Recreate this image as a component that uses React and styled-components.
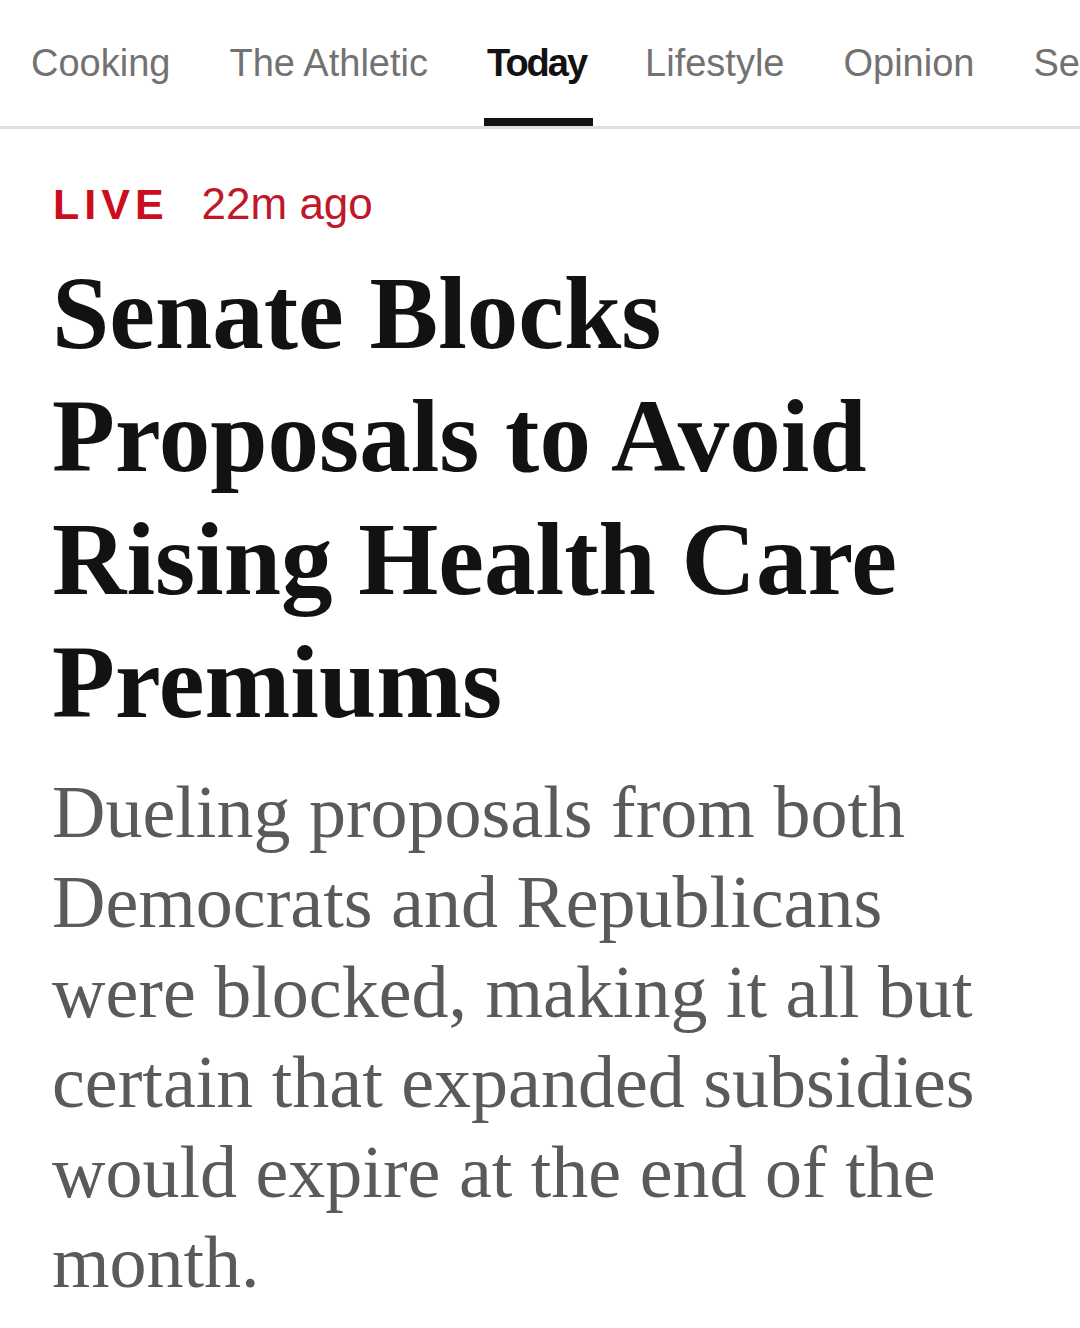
import React from "react";
import styled, { createGlobalStyle } from "styled-components";

const GlobalStyle = createGlobalStyle`
  html, body {
    margin: 0;
    padding: 0;
    background: #ffffff;
  }
  body {
    font-family: "Liberation Sans", Arial, sans-serif;
    -webkit-font-smoothing: antialiased;
  }
`;

const Page = styled.div`
  width: 1080px;
  min-height: 1328px;
  background: #ffffff;
  overflow: hidden;
`;

const TabBar = styled.nav`
  display: flex;
  align-items: center;
  gap: 59px;
  height: 126px;
  padding-left: 31px;
  border-bottom: 3px solid #dfdfdf;
  white-space: nowrap;
  overflow: hidden;
`;

const Tab = styled.a`
  position: relative;
  display: block;
  flex-shrink: 0;
  font-family: "Liberation Sans", Arial, sans-serif;
  font-size: 38px;
  line-height: 38px;
  font-weight: ${(p) => (p.$active ? 700 : 400)};
  letter-spacing: ${(p) => (p.$active ? "-2px" : "0")};
  color: ${(p) => (p.$active ? "#121212" : "#727272")};
  text-decoration: none;

  &::after {
    content: "";
    display: ${(p) => (p.$active ? "block" : "none")};
    position: absolute;
    left: -3px;
    right: -7px;
    top: 74px;
    height: 10px;
    background: #121212;
  }
`;

const Article = styled.article`
  padding: 50px 67px 0 52px;
`;

const Meta = styled.div`
  display: flex;
  align-items: baseline;
  line-height: 50px;
  height: 50px;
`;

const LiveTag = styled.span`
  font-family: "Liberation Sans", Arial, sans-serif;
  font-size: 43px;
  font-weight: 700;
  letter-spacing: 5px;
  color: #cc0d1e;
  margin-right: 33px;
  padding-left: 1px;
`;

const Timestamp = styled.span`
  font-family: "Liberation Sans", Arial, sans-serif;
  font-size: 44px;
  color: #c0182a;
`;

const Headline = styled.h1`
  margin: 23px 0 0;
  font-family: "Liberation Serif", "Times New Roman", serif;
  font-size: 103px;
  line-height: 123px;
  font-weight: 700;
  color: #121212;
`;

const Summary = styled.p`
  margin: 23px 0 0;
  font-family: "Liberation Serif", "Times New Roman", serif;
  font-size: 74px;
  line-height: 90px;
  font-weight: 400;
  color: #5a5a5a;
`;

const tabs = ["Cooking", "The Athletic", "Today", "Lifestyle", "Opinion", "Sections"];

export default function App() {
  return (
    <Page>
      <GlobalStyle />
      <TabBar>
        {tabs.map((t) => (
          <Tab key={t} $active={t === "Today"}>
            {t}
          </Tab>
        ))}
      </TabBar>
      <Article>
        <Meta>
          <LiveTag>LIVE</LiveTag>
          <Timestamp>22m ago</Timestamp>
        </Meta>
        <Headline>Senate Blocks Proposals to Avoid Rising Health Care Premiums</Headline>
        <Summary>
          Dueling proposals from both Democrats and Republicans were blocked, making it all
          but certain that expanded subsidies would expire at the end of the month.
        </Summary>
      </Article>
    </Page>
  );
}
